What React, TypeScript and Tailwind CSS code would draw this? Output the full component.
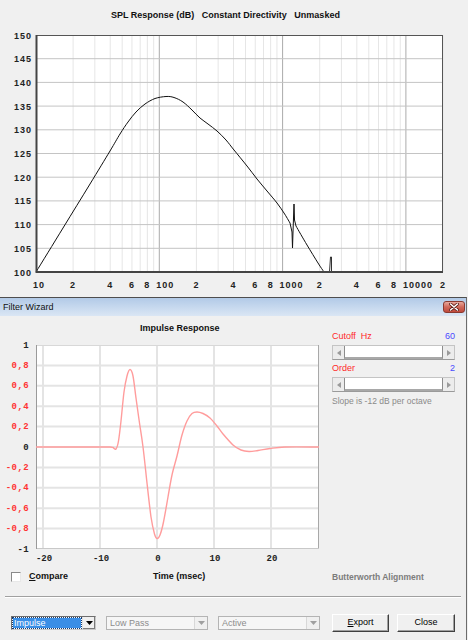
import React from 'react'

type Pt = [number, number]

// catmull-rom -> cubic bezier, so the curves don't look like polylines
function smooth(pts: Pt[]) {
  let d = `M${pts[0][0]},${pts[0][1]}`
  for (let i = 0; i < pts.length - 1; i++) {
    const p0 = pts[i - 1] || pts[i]
    const p1 = pts[i]
    const p2 = pts[i + 1]
    const p3 = pts[i + 2] || p2
    const c1x = p1[0] + (p2[0] - p0[0]) / 6
    const c1y = p1[1] + (p2[1] - p0[1]) / 6
    const c2x = p2[0] - (p3[0] - p1[0]) / 6
    const c2y = p2[1] - (p3[1] - p1[1]) / 6
    d += ` C${c1x.toFixed(1)},${c1y.toFixed(1)} ${c2x.toFixed(1)},${c2y.toFixed(1)} ${p2[0]},${p2[1]}`
  }
  return d
}

const SANS = '"Liberation Sans", Arial, sans-serif'
const MONO = '"Liberation Mono", "Courier New", monospace'

// SPL chart geometry (page coords)
const L = 36
const R = 443
const T = 35
const B = 272
const DEC = 123.3
const fx = (f: number) => L + DEC * Math.log10(f / 10)

const splMain: Pt[] = [
  [36, 272], [63, 228], [90, 184], [110, 151], [120, 134], [128, 122], [136, 112],
  [145, 104], [155, 98.5], [166, 96.5], [174, 97.5], [183, 102], [192, 110], [200, 118],
  [208, 124], [217, 131], [226, 140], [234, 150], [247, 166], [257, 179], [267, 191],
  [277, 203], [284, 213], [290, 223],
]
const splTail: Pt[] = [[296, 226], [307, 245], [318, 263], [324, 272]]

function SplChart() {
  const minors: number[] = []
  for (const dec of [10, 100, 1000, 10000]) {
    for (let m = 2; m <= 9; m++) {
      const f = dec * m
      if (f <= 20000) minors.push(fx(f))
    }
  }
  const labels: [number, string][] = [
    [10, '10'], [20, '2'], [40, '4'], [60, '6'], [80, '8'],
    [100, '100'], [200, '2'], [400, '4'], [600, '6'], [800, '8'],
    [1000, '1000'], [2000, '2'], [4000, '4'], [6000, '6'], [8000, '8'],
    [10000, '10000'], [20000, '2'],
  ]
  const step = (B - T) / 10
  return (
    <svg width={468} height={270} viewBox="0 27 468 270" className="block">
      <rect x={L} y={T} width={R - L} height={B - T} fill="#fff" />
      {minors.map((x, i) => (
        <line key={i} x1={x} y1={T} x2={x} y2={B} stroke="#e6e6e6" strokeWidth={1} />
      ))}
      {[100, 1000, 10000].map((f) => (
        <line key={f} x1={fx(f)} y1={T} x2={fx(f)} y2={B} stroke="#ababab" strokeWidth={1} />
      ))}
      {Array.from({ length: 9 }, (_, i) => T + step * (i + 1)).map((y, i) => (
        <line key={i} x1={L} y1={y} x2={R} y2={y} stroke="#c4c4c4" strokeWidth={1} />
      ))}
      <path d={smooth(splMain)} fill="none" stroke="#111" strokeWidth={1} />
      <polyline
        points="290,223 292,232 292.5,248 293,232 294,204 294.5,220 296,226"
        fill="none"
        stroke="#111"
        strokeWidth={1}
      />
      <path d={smooth(splTail)} fill="none" stroke="#111" strokeWidth={1} />
      <polyline points="329.5,272 330.5,257 331.5,257 331.5,272" fill="none" stroke="#333" strokeWidth={1} />
      <line x1={L} y1={T + 0.5} x2={R} y2={T + 0.5} stroke="#555" />
      <line x1={R - 0.5} y1={T} x2={R - 0.5} y2={B} stroke="#555" />
      <line x1={L + 0.5} y1={T} x2={L + 0.5} y2={B + 1} stroke="#444" strokeWidth={2} />
      <line x1={L} y1={B} x2={R} y2={B} stroke="#444" strokeWidth={2} />
      {Array.from({ length: 11 }, (_, i) => 150 - i * 5).map((v, i) => (
        <text
          key={v}
          x={32}
          y={T + step * i + 0.5}
          textAnchor="end"
          dominantBaseline="central"
          fontFamily={SANS}
          fontWeight="bold"
          fontSize={9}
          letterSpacing={1}
          fill="#222"
        >
          {v}
        </text>
      ))}
      {labels.map(([f, s]) => (
        <text
          key={f}
          x={fx(f) - 3}
          y={285}
          dominantBaseline="central"
          fontFamily={SANS}
          fontWeight="bold"
          fontSize={9}
          letterSpacing={1}
          fill="#222"
        >
          {s}
        </text>
      ))}
    </svg>
  )
}

// impulse chart geometry
const IL = 36
const IR = 319
const IT = 345
const IB = 549
const tx = (t: number) => 157 + 5.7 * t
const vy = (v: number) => 447 - 102 * v

const impulse: Pt[] = [
  [36, 447], [100, 447], [110, 447], [113, 447.5], [116, 449], [118.5, 441], [121, 421],
  [124, 392], [127, 376], [130, 369.5], [133, 376], [136, 398], [139.5, 423], [143, 447],
  [147, 483], [151, 517], [154.5, 534], [157, 538.5], [160, 535], [163.5, 522], [168, 497],
  [172, 475], [177, 456], [182, 435], [187, 421], [192, 413.5], [197, 412], [203, 413.5],
  [210, 418], [217, 426], [223, 434], [233, 445], [241, 450], [249, 451.5], [258, 450.5],
  [270, 448.5], [285, 447], [319, 447],
]

const yLabels: [number, string, boolean][] = [
  [1, '1', false], [0.8, '0,8', true], [0.6, '0,6', true], [0.4, '0,4', true], [0.2, '0,2', true],
  [0, '0', false], [-0.2, '-0,2', true], [-0.4, '-0,4', true], [-0.6, '-0,6', true],
  [-0.8, '-0,8', true], [-1, '-1', false],
]

function ImpulseChart() {
  return (
    <svg width={326} height={228} viewBox="0 338 326 228" className="block">
      <rect x={IL} y={IT} width={IR - IL} height={IB - IT} fill="#fff" />
      {[-20, -10, 0, 10, 20].map((t) => (
        <line key={t} x1={tx(t)} y1={IT} x2={tx(t)} y2={IB} stroke="#e4e4e4" strokeWidth={2} />
      ))}
      {Array.from({ length: 9 }, (_, i) => IT + 20.4 * (i + 1)).map((y, i) => (
        <line key={i} x1={IL} y1={y} x2={IR} y2={y} stroke="#e4e4e4" strokeWidth={2} />
      ))}
      <line x1={IL} y1={IT + 0.5} x2={IR} y2={IT + 0.5} stroke="#d8d8d8" />
      <line x1={IR - 0.5} y1={IT} x2={IR - 0.5} y2={IB} stroke="#a8a8a8" />
      <line x1={IL} y1={IB - 0.5} x2={IR} y2={IB - 0.5} stroke="#c8c8c8" />
      <line x1={IL + 0.5} y1={IT} x2={IL + 0.5} y2={IB} stroke="#9a9a9a" />
      <path d={smooth(impulse)} fill="none" stroke="#ff9c9c" strokeWidth={1.4} />
      {yLabels.map(([v, s, red]) => (
        <text
          key={s}
          x={29}
          y={vy(v) + 0.5}
          textAnchor="end"
          dominantBaseline="central"
          fontFamily={MONO}
          fontWeight="bold"
          fontSize={9}
          letterSpacing={0.4}
          fill={red ? '#ff3434' : '#222'}
        >
          {s}
        </text>
      ))}
      {[-20, -10, 0, 10, 20].map((t) => (
        <text
          key={t}
          x={tx(t) + 1}
          y={559}
          textAnchor="middle"
          dominantBaseline="central"
          fontFamily={MONO}
          fontWeight="bold"
          fontSize={9}
          fill="#222"
        >
          {t}
        </text>
      ))}
    </svg>
  )
}

function Slider() {
  return (
    <div className="flex h-[15px] border border-[#c4c4c4] border-b-[#9a9a9a] bg-[#ececec]">
      <div className="w-[11px] flex items-center justify-center">
        <svg width="4" height="6">
          <path d="M4 0 L0 3 L4 6Z" fill="#9a9a9a" />
        </svg>
      </div>
      <div className="flex-1 bg-white border-l border-r border-[#8c8c8c] border-b-2 border-b-[#a8a8a8]" />
      <div className="w-[11px] flex items-center justify-center">
        <svg width="4" height="6">
          <path d="M0 0 L4 3 L0 6Z" fill="#9a9a9a" />
        </svg>
      </div>
    </div>
  )
}

function Combo({ label, w, active }: { label: string; w: string; active?: boolean }) {
  return (
    <div
      className={`${w} h-[14px] flex border ${
        active ? 'border-[#6e6e6e] border-b-[#c8c8c8] border-r-[#c8c8c8] bg-white' : 'border-[#b4b4b4] bg-[#f6f6f6]'
      }`}
    >
      <div className="flex-1 flex items-center px-[1px] py-[1px]">
        {active ? (
          <div className="h-full w-full bg-[#3a8ee6] text-white text-[9px] leading-[10px] pl-[1px] outline outline-1 outline-dotted outline-[#1a3a6a]">
            {label}
          </div>
        ) : (
          <span className="text-[9px] leading-[10px] pl-[2px] text-[#8c8c8c]">{label}</span>
        )}
      </div>
      <div
        className={`w-[13px] flex items-center justify-center border-l ${
          active ? 'border-[#e0e0e0] bg-[#f0f0f0] shadow-[inset_-1px_-1px_0_#7a7a7a]' : 'border-[#d8d8d8] bg-[#f0f0f0]'
        }`}
      >
        <svg width="7" height="4">
          <path d="M0 0 L7 0 L3.5 4Z" fill={active ? '#000' : '#a0a0a0'} />
        </svg>
      </div>
    </div>
  )
}

function Button({ children, w }: { children: React.ReactNode; w: string }) {
  return (
    <div
      className={`${w} h-[18px] flex items-center justify-center text-[9px] text-black bg-[#f0f0f0] border border-t-white border-l-white border-r-[#404040] border-b-[#404040] shadow-[inset_-1px_-1px_0_#a0a0a0]`}
    >
      {children}
    </div>
  )
}

export default function App() {
  return (
    <div className="w-[468px] h-[640px] bg-[#f0f0f0] overflow-hidden flex flex-col font-['Liberation_Sans',Arial,sans-serif] text-[#111]">
      {/* SPL response */}
      <div className="h-[297px] flex flex-col">
        <div className="h-[27px] pl-[111px] pt-[10px] text-[9px] leading-[11px] font-bold whitespace-pre">
          SPL Response (dB)   Constant Directivity   Unmasked
        </div>
        <SplChart />
      </div>

      {/* Filter Wizard dialog */}
      <div className="flex-1 flex flex-col border-t border-[#4e4e4e] border-r border-r-[#6c6c6c] mr-[1px]">
        <div className="h-[18px] flex items-center justify-between pl-[3px] pr-[1px] bg-gradient-to-b from-[#b2cae7] via-[#c6d8ee] to-[#dae6f4]">
          <span className="text-[9px] leading-[11px] text-[#111]">Filter Wizard</span>
          <div className="w-[22px] h-[12px] rounded-[3px] border border-[#8a3a30] bg-gradient-to-b from-[#e8a89c] via-[#d0685a] to-[#c04a3c] flex items-center justify-center">
            <svg width="10" height="8" viewBox="0 0 10 8">
              <path d="M1.5 1 L8.5 7 M8.5 1 L1.5 7" stroke="#5a1a14" strokeWidth={3} strokeLinecap="round" />
              <path d="M1.5 1 L8.5 7 M8.5 1 L1.5 7" stroke="#fff" strokeWidth={1.6} strokeLinecap="round" />
            </svg>
          </div>
        </div>

        <div className="flex">
          <div className="w-[326px] flex flex-col">
            <div className="pt-[7px] pl-[140px] text-[9px] leading-[11px] font-bold">Impulse Response</div>
            <div className="mt-[4px]">
              <ImpulseChart />
            </div>
          </div>
          <div className="pl-[6px] pt-[15px] w-[129px] flex flex-col">
            <div className="flex justify-between text-[9px] leading-[11px]">
              <span className="text-[#ff2a2a] whitespace-pre">Cutoff  Hz</span>
              <span className="text-[#4a4aff]">60</span>
            </div>
            <div className="mt-[3px]">
              <Slider />
            </div>
            <div className="mt-[3px] flex justify-between text-[9px] leading-[11px]">
              <span className="text-[#ff2a2a]">Order</span>
              <span className="text-[#4a4aff]">2</span>
            </div>
            <div className="mt-[3px]">
              <Slider />
            </div>
            <div className="mt-[4px] text-[8.5px] leading-[11px] text-[#8a8a8a]">Slope is -12 dB per octave</div>
          </div>
        </div>

        <div className="mt-[4px] h-[14px] flex items-center pl-[11px] text-[9px] font-bold">
          <div className="w-[142px] flex items-center">
            <div className="w-[10px] h-[10px] bg-white border border-t-[#8a8a8a] border-l-[#8a8a8a] border-r-[#e8e8e8] border-b-[#e8e8e8]" />
            <span className="ml-[8px]">
              <span className="underline">C</span>ompare
            </span>
          </div>
          <div className="w-[179px]">Time (msec)</div>
          <div className="text-[#7c7c7c] text-[8.5px]">Butterworth Alignment</div>
        </div>

        <div className="mt-[12px] ml-[5px] w-[456px] h-[2px] border-t border-[#a0a0a0] border-b border-b-white" />

        <div className="mt-[16px] h-[18px] flex items-center pl-[11px]">
          <Combo label="Impulse" w="w-[85px]" active />
          <div className="ml-[10px]">
            <Combo label="Low Pass" w="w-[102px]" />
          </div>
          <div className="ml-[10px]">
            <Combo label="Active" w="w-[102px]" />
          </div>
          <div className="ml-[12px]">
            <Button w="w-[57px]">
              <span>
                <span className="underline">E</span>xport
              </span>
            </Button>
          </div>
          <div className="ml-[8px]">
            <Button w="w-[58px]">Close</Button>
          </div>
        </div>
      </div>
    </div>
  )
}
